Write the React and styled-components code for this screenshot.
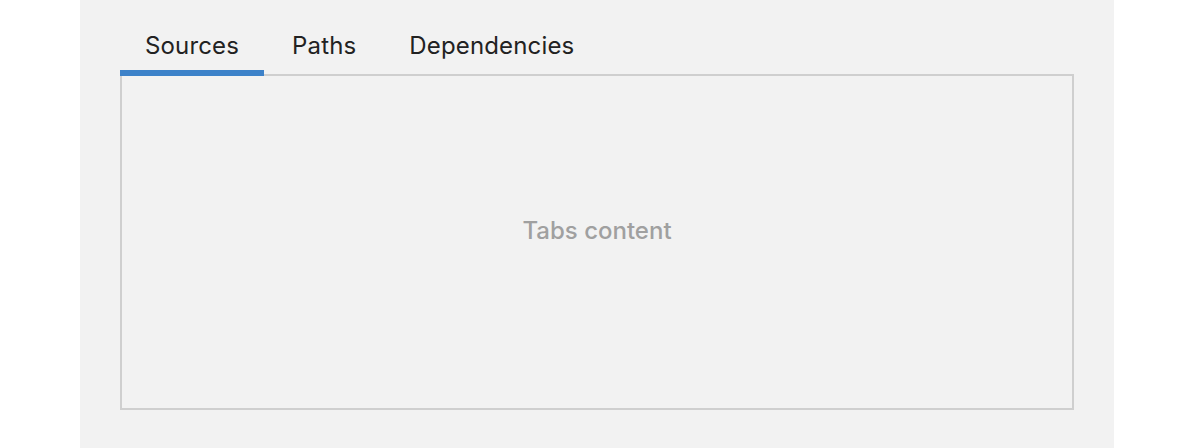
import React, { useState } from "react";
import styled, { createGlobalStyle } from "styled-components";

const GlobalStyle = createGlobalStyle`
	html, body {
		margin: 0;
		padding: 0;
		background: #ffffff;
		font-family: Inter, "Open Sans", sans-serif;
	}
`;

const Page = styled.div`
	width: 1034px;
	height: 448px;
	margin-left: 80px;
	background: #f2f2f2;
	padding: 0 40px;
	box-sizing: border-box;
	overflow: hidden;
`;

const TabList = styled.div`
	display: flex;
	gap: 3px;
	padding-top: 31px;
	margin-bottom: -2px;
	position: relative;
	z-index: 1;
`;

const Tab = styled.button`
	font-family: inherit;
	font-size: 24px;
	line-height: 30px;
	letter-spacing: 0.15px;
	color: #222222;
	background: none;
	border: none;
	padding: 0 25px 9px;
	border-bottom: 6px solid ${(props) => (props.$active ? "#3d82c9" : "transparent")};
	cursor: pointer;
`;

const Panel = styled.div`
	height: 336px;
	border: 2px solid #cfcfcf;
	box-sizing: border-box;
	display: flex;
	align-items: center;
	justify-content: center;
	padding-bottom: 24px;
	font-size: 24px;
	font-weight: 500;
	color: #a0a0a0;
`;

const tabs = ["Sources", "Paths", "Dependencies"];

const App = () => {
	const [active, setActive] = useState(0);
	return (
		<>
			<GlobalStyle />
			<Page>
				<TabList>
					{tabs.map((t, i) => (
						<Tab key={t} $active={i === active} onClick={() => setActive(i)}>
							{t}
						</Tab>
					))}
				</TabList>
				<Panel>Tabs content</Panel>
			</Page>
		</>
	);
};

export default App;
